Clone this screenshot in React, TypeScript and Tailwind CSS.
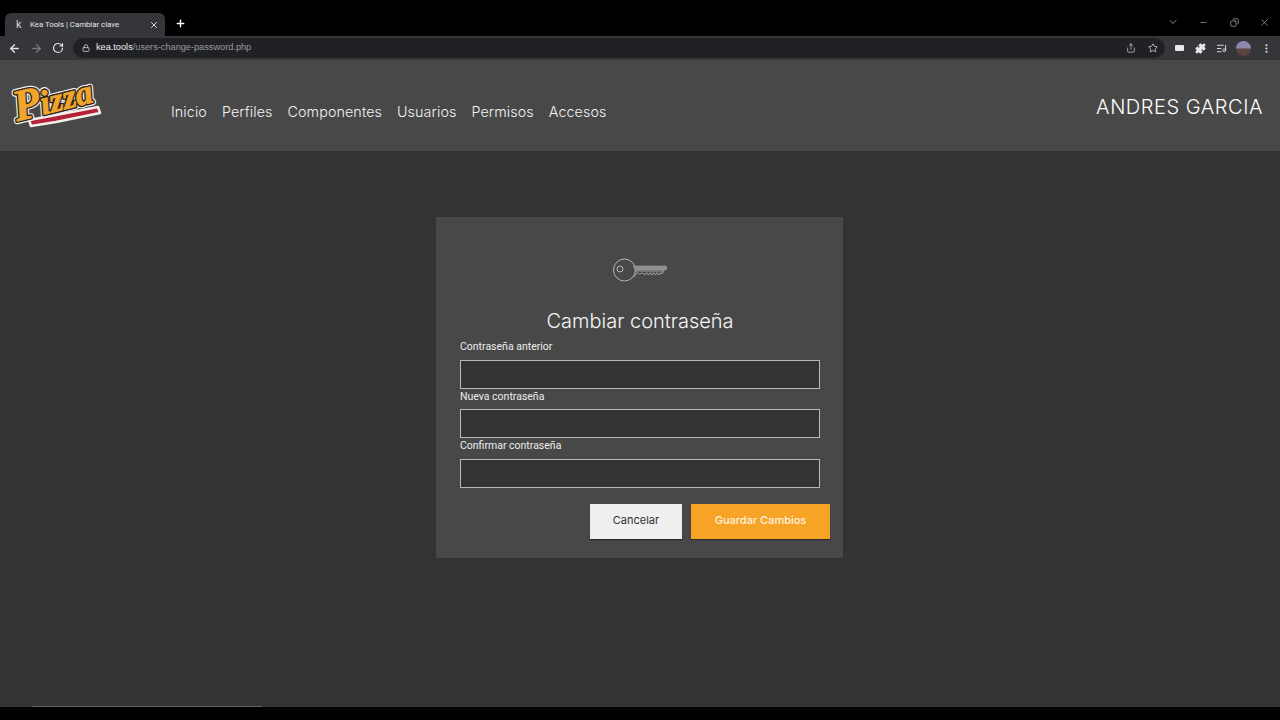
import React from "react";
import { ArrowLeft, ArrowRight, RotateCw, Lock, Share, Star, Puzzle, ListMusic, MoreVertical, X, Plus, ChevronDown, Minus, Copy } from "lucide-react";

const nav = ["Inicio", "Perfiles", "Componentes", "Usuarios", "Permisos", "Accesos"];

function Field({ label }: { label: string }) {
  return (
    <div className="flex flex-col">
      <label className="h-[20.5px] font-['Roboto',sans-serif] text-[10.5px] leading-[15px] text-[#ececec]">{label}</label>
      <div className="h-[29px] border border-[#b8b8b8] bg-[#333333]" />
    </div>
  );
}

function Logo() {
  const letters = (fill: string, stroke: string, w: number) => (
    <text
      transform="rotate(-14 6 39)"
      x="5"
      y="39"
      fontFamily="'Liberation Serif', serif"
      fontWeight="700"
      fontStyle="italic"
      fontSize="34"
      fill={fill}
      stroke={stroke}
      strokeWidth={w}
      strokeLinejoin="round"
    >
      <tspan fontSize="44">P</tspan>izza
    </text>
  );
  return (
    <svg width="92" height="50" viewBox="0 0 92 50" className="overflow-visible">
      <path d="M17 38 L44 33 L86 25 L88 31 L44 40 L19 44 Z" fill="#b5203a" stroke="#f4f0e8" strokeWidth="2.5" strokeLinejoin="round" />
      {letters("none", "#f4f0e8", 6)}
      {letters("none", "#2b2320", 3.6)}
      {letters("#f0a52c", "#f0a52c", 0.9)}
    </svg>
  );
}

function KeyIcon() {
  return (
    <svg width="56" height="26" viewBox="0 0 56 26" fill="none">
      <circle cx="12.5" cy="13" r="11" stroke="#b4b4b4" strokeWidth="1" />
      <circle cx="8" cy="12" r="3" stroke="#b4b4b4" strokeWidth="1" />
      <path d="M21 9 H54 L55 11 L54 13 H22.5" fill="#8f8f8f" stroke="#a0a0a0" strokeWidth="0.6" />
      <path d="M23 14 H52 L50 17 L48.5 15.5 L47 18 L45 15.5 L43.5 18 L41.5 15.5 L40 18 L38 15.5 L36.5 18 L34.5 15.5 L33 18 L31 16 L27 17 L25 15.5 L22 20" stroke="#b4b4b4" strokeWidth="0.8" />
    </svg>
  );
}

export default function App() {
  return (
    <div className="flex h-[720px] w-[1280px] flex-col overflow-hidden bg-black font-['Inter',sans-serif]">
      {/* Tab strip */}
      <div className="flex h-[36px] shrink-0 items-end justify-between">
        <div className="flex items-end">
          <div className="ml-[5px] flex h-[23px] w-[160px] items-center rounded-t-[6px] bg-[#35363a] pl-[11px] pr-[6px] font-['Roboto',sans-serif] text-[7.8px] text-[#e8e8e8]">
            <span className="w-[14px] text-[11px] leading-none text-[#d8d8d8]">k</span>
            <span className="flex-1 truncate">Kea Tools | Cambiar clave</span>
            <X size={10} strokeWidth={2.2} className="text-[#e8e8e8]" />
          </div>
          <Plus size={11} strokeWidth={3} className="mb-[7px] ml-[10px] text-white" />
        </div>
        <div className="mb-[8px] flex items-center pr-[10px] text-[#c6c6c6]">
          <ChevronDown size={12} strokeWidth={1.4} />
          <Minus size={9} strokeWidth={1.5} className="ml-[20px]" />
          <Copy size={9} strokeWidth={1.6} className="ml-[22px] -scale-x-100 text-[#d0d0d0]" />
          <X size={11} strokeWidth={1.3} className="ml-[20px]" />
        </div>
      </div>
      {/* Toolbar */}
      <div className="flex h-[24px] shrink-0 items-center bg-[#35363a] pl-[8px] pr-[8px]">
        <ArrowLeft size={13} strokeWidth={2.4} className="text-[#e6e6e6]" />
        <ArrowRight size={13} strokeWidth={2.4} className="ml-[9px] text-[#77787b]" />
        <RotateCw size={12} strokeWidth={2.4} className="ml-[9px] text-[#e6e6e6]" />
        <div className="ml-[9px] flex h-[20px] w-[1094px] items-center rounded-full bg-[#202124] pl-[9px] pr-[7px] font-['Liberation_Sans',sans-serif] text-[9.2px]">
          <Lock size={8} strokeWidth={2.6} className="text-[#c4c4c4]" />
          <span className="ml-[6px] text-[#f0f0f0]">kea.tools</span>
          <span className="text-[#9a9ba0]">/users-change-password.php</span>
          <Share size={10} strokeWidth={1.8} className="ml-auto text-[#c4c4c4]" />
          <Star size={10} strokeWidth={2} className="ml-[12px] text-[#d0d0d0]" />
        </div>
        <div className="ml-[10px] h-[6px] w-[9px] rounded-[1px] bg-[#e8e8e8]" />
        <Puzzle size={11} strokeWidth={2} fill="#e8e8e8" className="ml-[11px] text-[#e8e8e8]" />
        <ListMusic size={11} strokeWidth={2} className="ml-[10px] text-[#e8e8e8]" />
        <div className="ml-[9px] h-[15px] w-[15px] rounded-full bg-[linear-gradient(#8f88ad_45%,#5a463c_55%)]" />
        <MoreVertical size={11} strokeWidth={2.6} className="ml-[10px] text-[#e8e8e8]" />
      </div>
      {/* Header */}
      <header className="flex h-[91px] shrink-0 items-start justify-between bg-[#484848] pr-[17px] text-white shadow-[0_1px_2px_rgba(0,0,0,0.25)]">
        <div className="flex items-start">
          <div className="ml-[12px] mt-[22px]">
            <Logo />
          </div>
          <nav className="ml-[67px] mt-[43px] flex gap-[15px] text-[14.3px] leading-[18px] font-light tracking-[0.1px] text-[#f4f4f4]">
            {nav.map((n) => (
              <span key={n}>{n}</span>
            ))}
          </nav>
        </div>
        <div className="mt-[35px] text-[20px] leading-[24px] font-light tracking-[0.55px]">ANDRES GARCIA</div>
      </header>
      {/* Main */}
      <main className="flex h-[556px] shrink-0 justify-center bg-[#333333] pr-[1px] pt-[66px]">
        <div className="flex h-[341px] w-[407px] flex-col bg-[#484848] pl-[24px] pr-[23px]">
          <div className="mt-[40px] flex justify-center">
            <KeyIcon />
          </div>
          <h1 className="mt-[26px] text-center text-[20px] leading-[24px] font-light text-[#f5f5f5]">Cambiar contraseña</h1>
          <div className="mt-[6px] flex flex-col">
            <Field label="Contraseña anterior" />
            <Field label="Nueva contraseña" />
            <Field label="Confirmar contraseña" />
          </div>
          <div className="-mr-[10px] mt-[16px] flex justify-end gap-[9px]">
            <button className="h-[35px] w-[92px] bg-[#efefef] pb-[1px] text-[11px] text-[#333333] shadow-[0_1px_1px_rgba(0,0,0,0.4)]">Cancelar</button>
            <button className="h-[35px] w-[139px] bg-[#f7a325] pb-[1px] text-[11px] font-medium text-[#fdf3e0] shadow-[0_1px_1px_rgba(0,0,0,0.4)]">Guardar Cambios</button>
          </div>
        </div>
      </main>
      {/* Video bottom bar */}
      <div className="h-px w-[230px] shrink-0 translate-x-[32px] -translate-y-[1px] bg-[#666666]" />
    </div>
  );
}
